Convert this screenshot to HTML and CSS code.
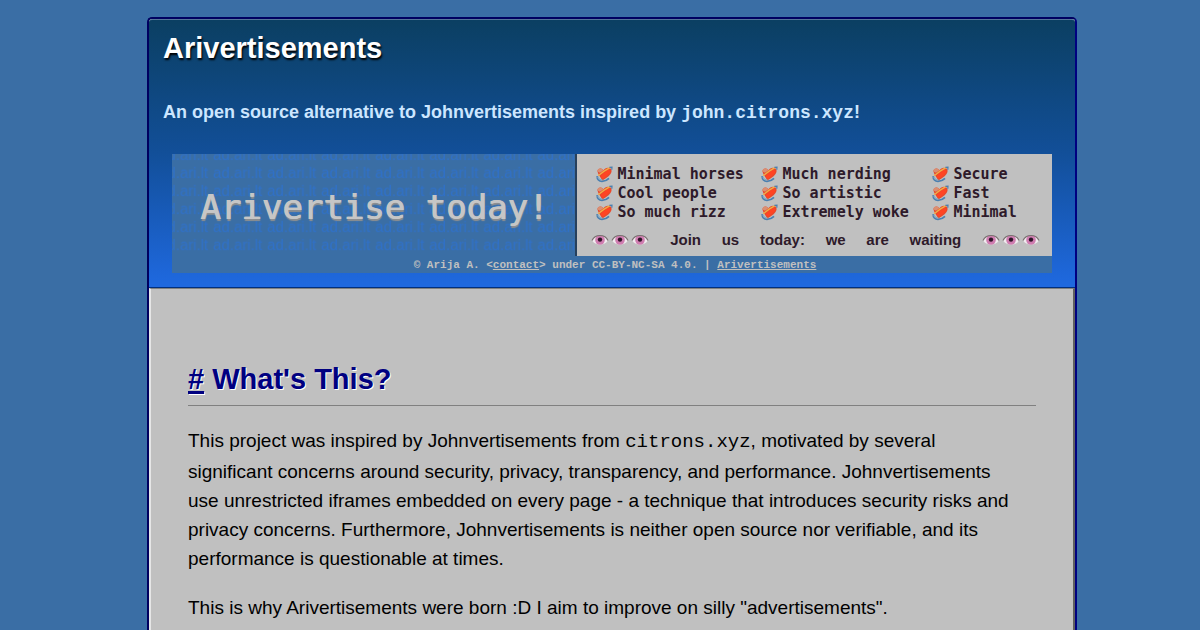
FILE: index.html
```html
<!DOCTYPE html>
<html lang="en">
<head>
<meta charset="utf-8">
<meta name="viewport" content="width=device-width, initial-scale=1">
<title>Arivertisements</title>
<link rel="stylesheet" href="styles.css">
</head>
<body>
<svg class="sprite" aria-hidden="true">
  <symbol id="heart" viewBox="0 0 17 17">
    <path d="M1.2 10C1 13.5 3 15.4 6 15.4C9 15.2 11.5 14 13 12.4" fill="none" stroke="#4a7fb0" stroke-width="1.7"/>
    <path d="M6.3 14.4C4.8 11.6 2 8.5 1.5 5.6C1.2 2.8 4.8 1.2 7.6 4.2C8.8 1.6 12.5 1 14.6 2.6C16.6 4.6 15.4 8 12.6 10.2C10.6 11.9 8.4 13.4 6.3 14.4Z" fill="#e8492c"/>
    <path d="M1.4 5.6C1.3 2.6 4.8 1.2 7.6 4.2L4 6.8Z" fill="#d98f72"/>
    <path d="M7 10.4L12.4 5.8" stroke="#ff4423" stroke-width="4" stroke-linecap="round"/>
    <path d="M2.2 9.8L7.8 5.4L14.4 1.4" fill="none" stroke="#f0ad48" stroke-width="1.4"/>
    <path d="M13.4 1.4L16 1.2L15.8 3.8" fill="none" stroke="#4a7fb0" stroke-width="1.2"/>
    <path d="M1.8 10.6C2.6 13 4.2 14 6.4 14" fill="none" stroke="#86a8c0" stroke-width="1.3"/>
  </symbol>
  <symbol id="eye" viewBox="0 0 18 14">
    <path d="M1 7.5C4 1.5 14 1.5 17 7.5C14 13 4 13 1 7.5Z" fill="#f0eaee"/>
    <circle cx="9" cy="7" r="4.8" fill="#cf7db0"/>
    <circle cx="9" cy="6.6" r="2.2" fill="#2e1428"/>
    <path d="M1 7.5C4 0.8 14 0.8 17 7.5" fill="none" stroke="#77706f" stroke-width="1.2"/>
  </symbol>
</svg>
<div class="page">
  <header class="header">
    <h1 class="title">Arivertisements</h1>
    <p class="tagline">An open source alternative to Johnvertisements inspired by <code class="code">john.citrons.xyz</code>!</p>
    <section class="ad">
      <div class="banners">
        <svg class="promo" viewBox="0 0 403 102" role="img" aria-label="Arivertise today!">
          <defs>
            <pattern id="marks" x="41" y="-10" width="54" height="18" patternUnits="userSpaceOnUse">
              <text class="mark" x="0" y="16">ad.ari.lt</text>
            </pattern>
          </defs>
          <rect width="403" height="99" fill="url(#marks)"/>
          <text class="promo-text" x="28" y="65">Arivertise today!</text>
        </svg>
        <div class="features">
          <ul class="list">
            <li class="item"><svg class="heart"><use href="#heart"/></svg>Minimal horses</li>
            <li class="item"><svg class="heart"><use href="#heart"/></svg>Cool people</li>
            <li class="item"><svg class="heart"><use href="#heart"/></svg>So much rizz</li>
            <li class="item"><svg class="heart"><use href="#heart"/></svg>Much nerding</li>
            <li class="item"><svg class="heart"><use href="#heart"/></svg>So artistic</li>
            <li class="item"><svg class="heart"><use href="#heart"/></svg>Extremely woke</li>
            <li class="item"><svg class="heart"><use href="#heart"/></svg>Secure</li>
            <li class="item"><svg class="heart"><use href="#heart"/></svg>Fast</li>
            <li class="item"><svg class="heart"><use href="#heart"/></svg>Minimal</li>
          </ul>
          <div class="join">
            <span class="eyes"><svg class="eye"><use href="#eye"/></svg><svg class="eye"><use href="#eye"/></svg><svg class="eye"><use href="#eye"/></svg></span>
            <span>Join</span><span>us</span><span>today:</span><span>we</span><span>are</span><span>waiting</span>
            <span class="eyes"><svg class="eye"><use href="#eye"/></svg><svg class="eye"><use href="#eye"/></svg><svg class="eye"><use href="#eye"/></svg></span>
          </div>
        </div>
      </div>
      <p class="credit">© Arija A. &lt;<a class="credit-link" href="#contact">contact</a>&gt; under CC-BY-NC-SA 4.0. | <a class="credit-link" href="#top">Arivertisements</a></p>
    </section>
  </header>
  <main class="content">
    <h2 class="heading" id="what"><a class="anchor" href="#what">#</a> What's This?</h2>
    <p class="text">This project was inspired by Johnvertisements from <code class="code">citrons.xyz</code>, motivated by several significant concerns around security, privacy, transparency, and performance. Johnvertisements use unrestricted iframes embedded on every page - a technique that introduces security risks and privacy concerns. Furthermore, Johnvertisements is neither open source nor verifiable, and its performance is questionable at times.</p>
    <p class="text">This is why Arivertisements were born :D I aim to improve on silly "advertisements".</p>
  </main>
</div>
</body>
</html>
```
FILE: styles.css
```css
* {
  box-sizing: border-box;
}

body {
  margin: 0;
  padding: 17px 16px 17px 40px;
  background: #3a6ea5;
  color: #000;
  font: 19px/29px "Liberation Sans", Arial, sans-serif;
}

.sprite {
  position: absolute;
  width: 0;
  height: 0;
}

.page {
  max-width: 930px;
  margin: 0 auto;
  border: 2px solid #000080;
  border-top-color: #000060;
  border-left-color: #000060;
  border-radius: 5px;
  background: #c0c0c0;
}

.header {
  padding: 11px 14px 14px;
  border-top: 1px solid #55769a;
  border-bottom: 1px solid #003080;
  border-radius: 3px 3px 0 0;
  background: linear-gradient(#0b3f62, #124f99 50%, #1f69e0);
}

.title {
  margin: 0;
  color: #fff;
  font-size: 29px;
  line-height: 34px;
  text-shadow: 1px 2px 2px #000;
}

.tagline {
  margin: 34px 0 28px;
  color: #cce6ff;
  font-size: 18px;
  font-weight: bold;
  line-height: 26px;
}

.code {
  font-family: "Liberation Mono", "Courier New", monospace;
  font-size: 1em;
}

.ad {
  margin: 0 9px;
  background: #3a6ea5;
}

.banners {
  display: grid;
  grid-template-columns: 403fr 476fr;
}

.promo {
  display: block;
  width: 100%;
}

.mark {
  fill: #2f70c8;
  font: 15px "Liberation Sans", Arial, sans-serif;
}

.promo-text {
  fill: #c6c6c6;
  font: 34px "DejaVu Sans Mono", monospace;
  text-shadow: 1px 0 0 #c6c6c6, 1px 2px 1px #909090;
}

.features {
  padding: 11px 12px 0 14px;
  border-left: 2px solid #27405c;
  background: #c0c0c0;
  color: #2e1a2a;
}

.list {
  display: grid;
  grid-template-columns: 165px 171px auto;
  grid-template-rows: repeat(3, 19px);
  grid-auto-flow: column;
  margin: 0;
  padding: 0 0 0 5px;
  list-style: none;
  font: bold 15px/19px "DejaVu Sans Mono", monospace;
  white-space: nowrap;
}

.item {
  display: flex;
  align-items: center;
  gap: 4px;
}

.heart {
  width: 17px;
  height: 17px;
}

.join {
  display: flex;
  justify-content: space-between;
  align-items: center;
  margin-top: 8px;
  font: bold 15px/20px "Liberation Sans", Arial, sans-serif;
}

.eyes {
  display: flex;
  gap: 2px;
}

.eye {
  width: 18px;
  height: 14px;
}

.credit {
  margin: 0;
  padding: 1px 0 0 6px;
  color: #c0c0c0;
  font: bold 11px/16px "Liberation Mono", "Courier New", monospace;
  text-align: center;
}

.credit-link {
  color: inherit;
}

.content {
  padding: 72px 37px 40px;
  border: 2px solid;
  border-width: 1px 2px;
  border-color: #808080 #606060 #808080 #e6e6e6;
}

.heading {
  margin: 0 0 20px;
  padding-bottom: 7px;
  border-bottom: 1px solid #808080;
  color: #000080;
  font-size: 29px;
  line-height: 37px;
  text-shadow: 1px 1px 0 #fff;
}

.anchor {
  color: inherit;
  text-decoration-thickness: 3px;
  text-decoration-skip-ink: none;
}

.text {
  margin: 0 0 20px;
  padding-right: 20px;
}
```
